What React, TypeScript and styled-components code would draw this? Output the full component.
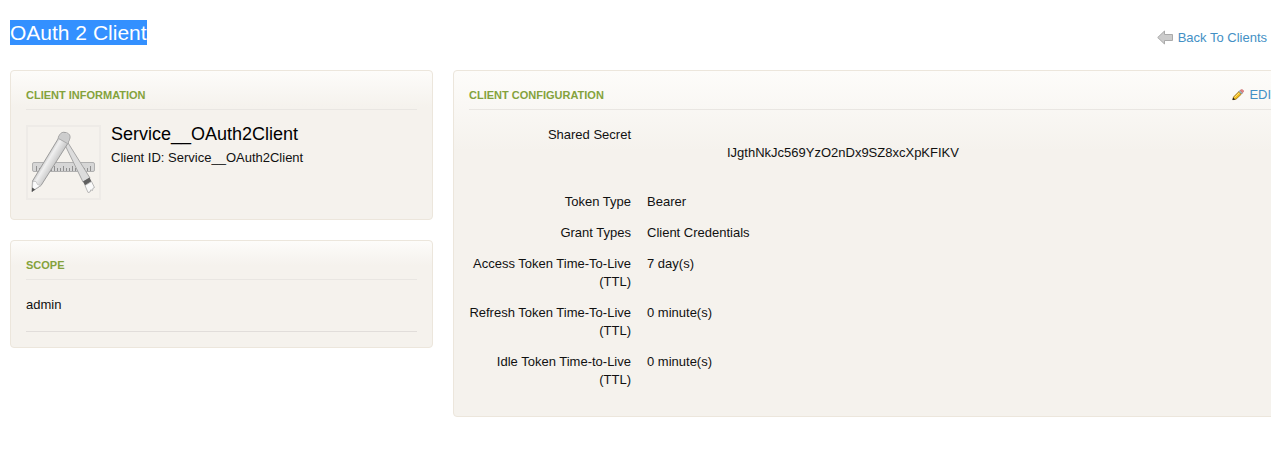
import React from "react";
import styled, { createGlobalStyle } from "styled-components";

const GlobalStyle = createGlobalStyle`
  body {
    margin: 0;
    background: #fff;
    color: #111;
    font: 13px/18px "Liberation Sans", Arial, sans-serif;
  }
`;

const Page = styled.main`
  padding: 20px 0 36px 10px;
  overflow: hidden;
`;

const Header = styled.header`
  display: flex;
  justify-content: space-between;
  align-items: flex-end;
  min-height: 27px;
  padding-right: 4px;
  margin-bottom: 23px;
`;

const Title = styled.h1`
  align-self: flex-start;
  margin: 0;
  font-size: 21px;
  line-height: 25px;
  font-weight: 400;
  color: #fff;
  background: #3390ff;
`;

const ActionLink = styled.a`
  display: inline-flex;
  align-items: center;
  gap: 5px;
  flex: none;
  color: #4390c5;
  text-decoration: none;
  white-space: nowrap;
`;

const Columns = styled.div`
  display: grid;
  grid-template-columns: 423px minmax(0, 1fr);
  gap: 20px;
  align-items: start;
  margin-right: -24px;
`;

const Sidebar = styled.div`
  display: grid;
  gap: 20px;
`;

const Panel = styled.section<{ $fade: number }>`
  padding: 15px;
  border: 1px solid #ece6dc;
  border-radius: 4px;
  background: #f5f2ed linear-gradient(#fdfcfa, #f5f2ed) 0 0 / 100% ${(p) => p.$fade}px no-repeat;
`;

const PanelHead = styled.div`
  display: flex;
  justify-content: space-between;
  padding-bottom: 5px;
  margin-bottom: 15px;
  border-bottom: 1px solid #e9e6e2;
`;

const PanelTitle = styled.h2`
  margin: 0;
  font-size: 11px;
  line-height: 18px;
  font-weight: 700;
  text-transform: uppercase;
  color: #84a23c;
`;

const ClientCard = styled.div`
  display: flex;
  gap: 10px;
  padding-bottom: 4px;
`;

const ClientName = styled.h3`
  margin: 0;
  font-size: 18px;
  line-height: 18px;
  font-weight: 400;
  color: #000;
`;

const ClientId = styled.p`
  margin: 6px 0 0;
`;

const Scopes = styled.ul`
  list-style: none;
  margin: 0;
  padding: 1px 0 17px;
  border-bottom: 1px solid #e1ddda;
`;

const Settings = styled.dl`
  display: grid;
  gap: 13px;
  margin: 0;
  padding: 1px 0 12px;
`;

const Setting = styled.div`
  display: grid;
  grid-template-columns: 162px 1fr;
  gap: 16px;
`;

const Term = styled.dt`
  text-align: right;
`;

const Value = styled.dd<{ $inset?: boolean }>`
  margin: 0;
  padding: ${(p) => (p.$inset ? "18px 80px" : "0")};
`;

const settings = [
  { term: "Shared Secret", value: "IJgthNkJc569YzO2nDx9SZ8xcXpKFIKV", inset: true },
  { term: "Token Type", value: "Bearer" },
  { term: "Grant Types", value: "Client Credentials" },
  { term: "Access Token Time-To-Live (TTL)", value: "7 day(s)" },
  { term: "Refresh Token Time-To-Live (TTL)", value: "0 minute(s)" },
  { term: "Idle Token Time-to-Live (TTL)", value: "0 minute(s)" },
];

const BackIcon = () => (
  <svg width="16" height="16" viewBox="0 0 16 16" aria-hidden="true">
    <path d="M.7 7.500 7.500 1V4.500h8v6h-8V14z" fill="#ccc" stroke="#aaa" />
  </svg>
);

const PencilIcon = () => (
  <svg width="12" height="12" viewBox="0 0 12 12" aria-hidden="true">
    <path d="M.8 10.700 1.500 8 7 2.500 9.500 5 4 10.200z" fill="#f5bf1c" stroke="#8a6414" strokeWidth=".8" />
    <path d="M2.500 8.500 7.500 3.500" stroke="#ffe27a" />
    <path d="M7 2.500 8 1.500 10.500 4 9.500 5z" fill="#b9cbd8" stroke="#5f6b78" strokeWidth=".6" />
    <path d="M8.300 1.200 9 .7h1.500l.9.900V3l-.7.700z" fill="#ee8a8a" stroke="#b84a4a" strokeWidth=".5" />
    <path d="M.5 11 1.200 8.500 3.200 10.500z" fill="#222" />
  </svg>
);

const AppIcon = () => (
  <svg width="75" height="75" viewBox="0 0 75 75" role="img" aria-label="Application">
    <defs>
      <linearGradient id="barrel" gradientUnits="userSpaceOnUse" x1="19" y1="34" x2="29" y2="40">
        <stop offset="0" stopColor="#c8c8c8" />
        <stop offset=".3" stopColor="#f0f0f0" />
        <stop offset="1" stopColor="#c6c6c6" />
      </linearGradient>
    </defs>
    <rect x="1" y="1" width="73" height="73" fill="#f5f2ed" stroke="#eeebe7" strokeWidth="2" />
    <rect x="6.500" y="37.500" width="62" height="9" rx="1.500" fill="#d6d6d6" stroke="#b0b0b0" />
    <path
      d="M10.500 41v5M13.500 43v3M16.500 43v3M19.500 41v5M22.500 43v3M25.500 43v3M28.500 41v5M31.500 43v3M34.500 43v3M37.500 41v5M40.500 43v3M43.500 43v3M46.500 41v5M49.500 43v3M52.500 43v3M55.500 41v5M58.500 43v3M61.500 43v3M64.500 41v5"
      stroke="#909090"
    />
    <path d="M39 20 41.500 17 64 53 57 57z" fill="#dcdcdc" stroke="#a6a6a6" />
    <path d="M57 56.500 63.500 52.500 65.500 56.500 59 60.500z" fill="#606060" />
    <path
      d="M59 60.500 65.500 56.500 68.500 62.500 67 63.200 66.500 65.500 64.800 64.800 64 67 62 67.500z"
      fill="#fafafa"
      stroke="#a8a8a8"
      strokeWidth=".8"
    />
    <path d="M6.500 56 32 14C33 9 36 6.500 39 7.500 43 8 45 10.500 43.500 14.500L41.500 19 15 60.500 6 66.500z" fill="url(#barrel)" stroke="#9c9c9c" />
    <path d="M32.500 13.500C34 9 36 7.500 39 8 42.500 8.800 44 11 43 14.500L41.500 18.500z" fill="#cdcdcd" />
    <path d="M32.500 13.500 41.500 18.500" stroke="#aaa" />
    <path d="M6.800 56.500 10 56.500 11.500 59.500 14.500 60.500 6.300 66z" fill="#fbfbfb" stroke="#b4b4b4" strokeWidth=".6" />
    <path d="M6.200 62.500 9.200 64.500 5.800 67z" fill="#505050" />
  </svg>
);

export default function App() {
  return (
    <>
      <GlobalStyle />
      <Page>
        <Header>
          <Title>OAuth 2 Client</Title>
          <ActionLink href="#clients">
            <BackIcon />
            Back To Clients
          </ActionLink>
        </Header>
        <Columns>
          <Sidebar>
            <Panel $fade={36}>
              <PanelHead>
                <PanelTitle>Client Information</PanelTitle>
              </PanelHead>
              <ClientCard>
                <AppIcon />
                <div>
                  <ClientName>Service__OAuth2Client</ClientName>
                  <ClientId>Client ID: Service__OAuth2Client</ClientId>
                </div>
              </ClientCard>
            </Panel>
            <Panel $fade={24}>
              <PanelHead>
                <PanelTitle>Scope</PanelTitle>
              </PanelHead>
              <Scopes>
                <li>admin</li>
              </Scopes>
            </Panel>
          </Sidebar>
          <Panel $fade={80}>
            <PanelHead>
              <PanelTitle>Client Configuration</PanelTitle>
              <ActionLink href="#edit">
                <PencilIcon />
                EDIT
              </ActionLink>
            </PanelHead>
            <Settings>
              {settings.map(({ term, value, inset }) => (
                <Setting key={term}>
                  <Term>{term}</Term>
                  <Value $inset={inset}>{value}</Value>
                </Setting>
              ))}
            </Settings>
          </Panel>
        </Columns>
      </Page>
    </>
  );
}
